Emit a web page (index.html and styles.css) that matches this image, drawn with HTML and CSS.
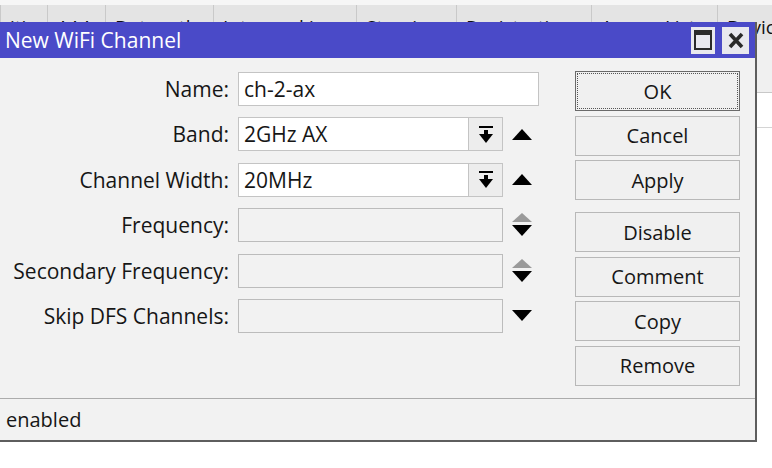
FILE: index.html
```html
<!DOCTYPE html>
<html lang="en">
<head>
  <meta charset="UTF-8">
  <meta name="viewport" content="width=device-width, initial-scale=1.0">
  <title>New WiFi Channel</title>
  <link rel="stylesheet" href="styles.css">
</head>
<body>

  <div class="tabs">
    <div class="tab">ities</div>
    <div class="tab">AAA</div>
    <div class="tab">Datapath</div>
    <div class="tab">Interworking</div>
    <div class="tab">Steering</div>
    <div class="tab">Registration</div>
    <div class="tab">Access List</div>
    <div class="tab last">Devices</div>
  </div>
  <div class="grid-head"></div>
  <div class="grid-row"></div>

  <div class="window">
    <div class="titlebar">
      <span class="title">New WiFi Channel</span>
      <span class="tb-btn">
        <svg width="18" height="20" viewBox="0 0 18 20"><rect x="1" y="1" width="16" height="18" fill="none" stroke="#2a2a2a" stroke-width="2"/><rect x="1" y="1" width="16" height="4" fill="#2a2a2a"/></svg>
      </span>
      <span class="tb-btn close">
        <svg width="16" height="17" viewBox="0 0 16 17"><path d="M2 2 L14 15 M14 2 L2 15" stroke="#2a2a2a" stroke-width="3.6"/></svg>
      </span>
    </div>

    <div class="content">
      <div class="form">
        <div class="row">
          <label class="label">Name:</label>
          <div class="field name">ch-2-ax</div>
        </div>
        <div class="row">
          <label class="label">Band:</label>
          <div class="combo">
            <div class="combo-text">2GHz AX</div>
            <div class="drop">
              <svg width="14" height="17" viewBox="0 0 14 17"><rect x="0" y="0" width="14" height="2"/><rect x="5" y="4" width="4" height="5"/><polygon points="0,8 14,8 7,17"/></svg>
            </div>
          </div>
          <span class="arrow">
            <svg width="20" height="11" viewBox="0 0 20 11"><polygon points="0,11 20,11 10,0"/></svg>
          </span>
        </div>
        <div class="row">
          <label class="label">Channel Width:</label>
          <div class="combo">
            <div class="combo-text">20MHz</div>
            <div class="drop">
              <svg width="14" height="17" viewBox="0 0 14 17"><rect x="0" y="0" width="14" height="2"/><rect x="5" y="4" width="4" height="5"/><polygon points="0,8 14,8 7,17"/></svg>
            </div>
          </div>
          <span class="arrow">
            <svg width="20" height="11" viewBox="0 0 20 11"><polygon points="0,11 20,11 10,0"/></svg>
          </span>
        </div>
        <div class="row">
          <label class="label">Frequency:</label>
          <div class="field off"></div>
          <span class="arrow">
            <svg width="20" height="24" viewBox="0 0 20 24"><polygon points="0,9 20,9 10,0" fill="#9a9a9a"/><polygon points="0,12 20,12 10,23"/></svg>
          </span>
        </div>
        <div class="row">
          <label class="label">Secondary Frequency:</label>
          <div class="field off"></div>
          <span class="arrow">
            <svg width="20" height="24" viewBox="0 0 20 24"><polygon points="0,9 20,9 10,0" fill="#9a9a9a"/><polygon points="0,12 20,12 10,23"/></svg>
          </span>
        </div>
        <div class="row">
          <label class="label">Skip DFS Channels:</label>
          <div class="field off"></div>
          <span class="arrow">
            <svg width="20" height="11" viewBox="0 0 20 11"><polygon points="0,0 20,0 10,11"/></svg>
          </span>
        </div>
      </div>

      <div class="buttons">
        <button class="btn default">OK</button>
        <button class="btn">Cancel</button>
        <button class="btn">Apply</button>
        <button class="btn spaced">Disable</button>
        <button class="btn">Comment</button>
        <button class="btn">Copy</button>
        <button class="btn">Remove</button>
      </div>
    </div>

    <div class="status">enabled</div>
  </div>

</body>
</html>
```

FILE: styles.css
```css
* {
  box-sizing: border-box;
}

body {
  margin: 0;
  width: 772px;
  height: 468px;
  overflow: hidden;
  position: relative;
  background: #fff;
  font-family: "Open Sans", "Noto Sans", sans-serif;
  font-size: 21px;
  color: #161616;
}

/* the window behind the dialog */
.tabs {
  display: grid;
  grid-template-columns: 47px 58px 108px 143px 100px 135px 126px 1fr;
  align-items: start;
  height: 40px;
  background: #e4e4e4;
  border-top: 5px solid #f6f6f6;
  font-size: 19px;
  color: #111;
}

.tab {
  height: 17px;
  padding: 9px 0 0 9px;
  border-left: 1px solid #c9c9c9;
  white-space: nowrap;
  overflow: hidden;
}

.tab.last {
  height: 35px;
}

.grid-head {
  height: 53px;
  background: #f0f0f0;
  border-bottom: 1px solid #c8c8c8;
}

.grid-row {
  height: 35px;
  border-bottom: 1px solid #d4d4d4;
}

/* dialog */
.window {
  position: absolute;
  left: 0;
  top: 22px;
  width: 757px;
  background: #f2f2f2;
  border-right: 2px solid #5e5e5e;
  border-bottom: 2px solid #5e5e5e;
}

.titlebar {
  display: flex;
  align-items: center;
  height: 36px;
  padding: 0 6px 0 5px;
  background: #4a4ac8;
  color: #fff;
}

.title {
  flex: 1;
}

.tb-btn {
  display: flex;
  align-items: center;
  justify-content: center;
  width: 24px;
  height: 27px;
  background: #e8e8ee;
}

.tb-btn.close {
  width: 27px;
  margin-left: 7px;
}

.content {
  display: flex;
  height: 340px;
  padding-top: 14px;
}

.form {
  display: flex;
  flex-direction: column;
  gap: 11.4px;
  width: 539px;
}

.row {
  display: flex;
  align-items: center;
  height: 34px;
}

.label {
  width: 229px;
  margin-right: 9px;
  text-align: right;
  white-space: nowrap;
}

.field {
  height: 34px;
  padding-left: 5px;
  line-height: 32px;
  background: #fff;
  border: 1px solid #c4c4c4;
}

.field.name {
  width: 301px;
}

.field.off {
  width: 265px;
  background: #f2f2f2;
  border-color: #bcbcbc;
}

.combo {
  display: flex;
  width: 265px;
  height: 34px;
  background: #fff;
  border: 1px solid #c4c4c4;
}

.combo-text {
  flex: 1;
  padding-left: 5px;
  line-height: 32px;
}

.drop {
  display: flex;
  align-items: center;
  justify-content: center;
  width: 34px;
  background: #ededed;
  border-left: 1px solid #c4c4c4;
}

.arrow {
  display: flex;
  margin-left: 9px;
}

.buttons {
  display: flex;
  flex-direction: column;
  gap: 4.5px;
  width: 165px;
  margin: -1px 0 0 36px;
}

.btn {
  height: 40px;
  padding: 0;
  font-family: inherit;
  font-size: 20px;
  color: #161616;
  background: #f0f0f0;
  border: 1px solid #b8b8b8;
}

.btn.default {
  position: relative;
  border-color: #6a6a6a;
}

.btn.default::after {
  content: "";
  position: absolute;
  inset: 1px;
  border: 1px dotted #555;
}

.btn.spaced {
  margin-top: 7.5px;
}

.status {
  height: 42px;
  padding-left: 6px;
  line-height: 41px;
  font-size: 20px;
  border-top: 1px solid #acacac;
}
```
